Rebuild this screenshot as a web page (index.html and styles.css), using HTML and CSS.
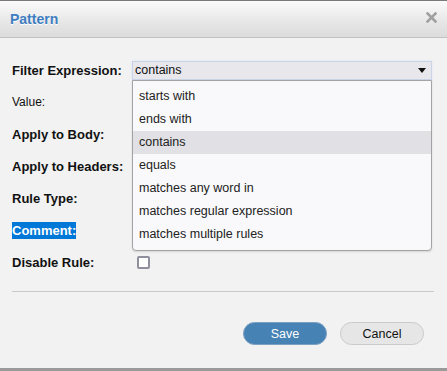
FILE: index.html
```
<!DOCTYPE html>
<html>
<head>
<meta charset="utf-8">
<link rel="stylesheet" href="styles.css">
</head>
<body>
<div class="dialog">
  <div class="header">
    <span class="title">Pattern</span>
    <svg class="close" width="11" height="11" viewBox="0 0 11 11"><path d="M1.5 1.5 L9.5 9.5 M9.5 1.5 L1.5 9.5" stroke="#a0a0a0" stroke-width="2.6" stroke-linecap="square"/></svg>
  </div>
  <div class="content">
    <div class="form">
      <div class="row">
        <div class="label bold">Filter Expression:</div>
        <div class="field">
          <div class="select">
            <span class="select-text">contains</span>
            <span class="arrow"></span>
            <ul class="list">
              <li>starts with</li>
              <li>ends with</li>
              <li class="hover">contains</li>
              <li>equals</li>
              <li>matches any word in</li>
              <li>matches regular expression</li>
              <li>matches multiple rules</li>
            </ul>
          </div>
        </div>
      </div>
      <div class="row"><div class="label">Value:</div></div>
      <div class="row"><div class="label bold">Apply to Body:</div></div>
      <div class="row"><div class="label bold">Apply to Headers:</div></div>
      <div class="row"><div class="label bold">Rule Type:</div></div>
      <div class="row"><div class="label bold"><span class="sel">Comment:</span></div></div>
      <div class="row">
        <div class="label bold">Disable Rule:</div>
        <div class="field"><span class="checkbox"></span></div>
      </div>
    </div>
    <div class="sep"></div>
    <div class="buttons">
      <button class="btn save">Save</button>
      <button class="btn cancel">Cancel</button>
    </div>
  </div>
</div>
</body>
</html>
```
FILE: styles.css
```
* { box-sizing: border-box; }
html, body { margin: 0; padding: 0; }
body {
  width: 447px;
  height: 371px;
  overflow: hidden;
  font-family: "Liberation Sans", Arial, sans-serif;
  background: #f2f2f2;
  color: #111;
}
.dialog {
  width: 447px;
  height: 371px;
  border-top: 1px solid #7a7a7a;
  border-bottom: 3px solid #9a9a9a;
  background: #f2f2f2;
  display: flex;
  flex-direction: column;
}
.header {
  height: 37px;
  flex: none;
  border-bottom: 1px solid #c2c2c2;
  background: linear-gradient(#fbfbfb, #e6e6e7 60%, #dcdcdd);
  display: flex;
  align-items: center;
  justify-content: space-between;
  padding: 0 10px 1px 10px;
}
.title {
  font-weight: bold;
  font-size: 14px;
  color: #3e7dbf;
  text-shadow: 0 1px 0 #fff;
}
.close { margin-top: -3px; margin-right: 0; }
.content {
  flex: 1;
  display: flex;
  flex-direction: column;
  padding: 16px 13px 0 12px;
}
.form { display: flex; flex-direction: column; }
.row {
  height: 32px;
  display: flex;
  align-items: center;
}
.label {
  width: 120px;
  flex: none;
  font-size: 12px;
  color: #111;
}
.label.bold { font-weight: bold; font-size: 13px; }
.sel {
  background: #0078d7;
  color: #fff;
  padding: 1px 0;
}
.field { flex: 1; display: flex; align-items: center; }
.select {
  position: relative;
  width: 300px;
  height: 19px;
  background: #e8e8ec;
  border: 1px solid #c9d5e6;
  box-shadow: 0 0 2px #d8e4f4;
  display: flex;
  align-items: center;
  padding-left: 2px;
}
.select-text { font-size: 12.5px; color: #111; flex: 1; }
.arrow {
  width: 0; height: 0;
  border-left: 4.5px solid transparent;
  border-right: 4.5px solid transparent;
  border-top: 5px solid #111;
  margin-right: 5px;
}
.list {
  position: absolute;
  left: -1px;
  top: 18px;
  width: 300px;
  margin: 0;
  padding: 4px 0;
  list-style: none;
  background: #f9f9fb;
  border: 1px solid #a3a3a3;
  border-radius: 0 0 4px 4px;
  box-shadow: 0 1px 2px rgba(0,0,0,0.12);
  z-index: 2;
}
.list li {
  height: 23px;
  line-height: 23px;
  padding-left: 6px;
  font-size: 12.5px;
  color: #222;
}
.list li.hover { background: #e0e0e5; }
.checkbox {
  display: block;
  width: 13px;
  height: 13px;
  margin-left: 5px;
  margin-top: 1px;
  border: 2px solid #8f8f9d;
  border-radius: 2px;
  background: #fff;
}
.sep {
  margin-top: 13px;
  height: 1px;
  background: #c9c9c9;
  flex: none;
}
.buttons {
  display: flex;
  justify-content: flex-end;
  gap: 13px;
  margin-top: 30px;
  padding-right: 10px;
}
.btn {
  width: 84px;
  height: 23px;
  border-radius: 12px;
  font-family: "Liberation Sans", Arial, sans-serif;
  font-size: 12.5px;
  padding: 0;
}
.save {
  background: #4682b4;
  border: 1px solid #7c9fc2;
  color: #fff;
}
.cancel {
  background: #e6e6e6;
  border: 1px solid #cbcbcb;
  color: #111;
}
```
